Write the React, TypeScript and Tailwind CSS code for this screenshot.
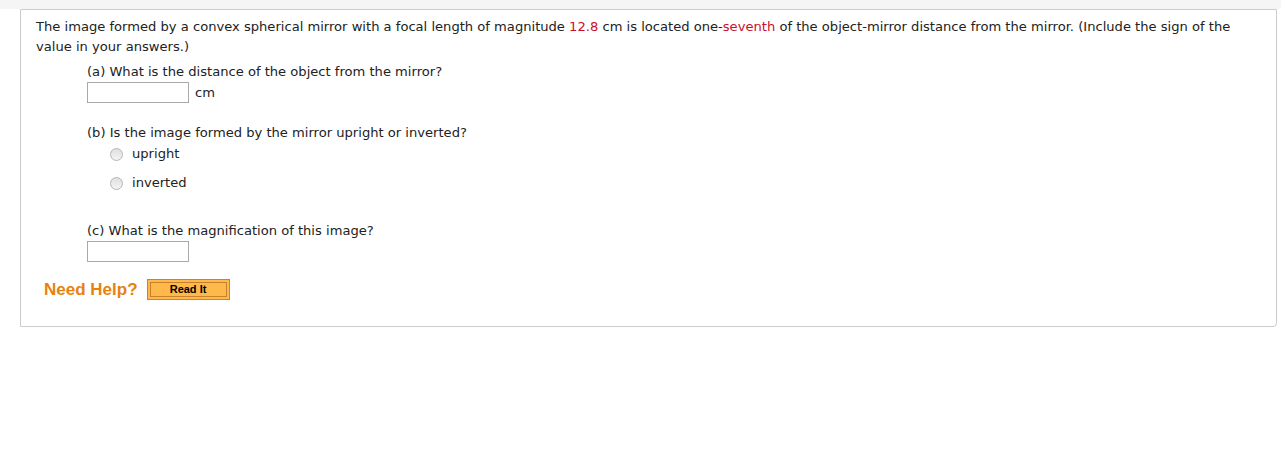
import React from 'react';

function Radio({ label }: { label: string }) {
  return (
    <label className="flex items-center h-[20px]">
      <span className="w-[13px] h-[13px] rounded-full border border-[#b5b5b5] bg-gradient-to-b from-[#e0e0e0] to-[#f4f4f4] ml-[89px] mr-[9px]" />
      <span>{label}</span>
    </label>
  );
}

export default function App() {
  return (
    <div className="bg-white w-[1281px] h-[460px] text-[13.1px] leading-[20px] text-[#222] font-['DejaVu_Sans',Verdana,sans-serif]">
      <div className="h-[9px] bg-[#f5f5f5]" />
      <div className="ml-[20px] mr-[4px] border border-[#cccccc] rounded-br-[4px] pl-[15px] pr-[10px] pt-[7px] pb-[26px]">
        <p className="max-w-[1212px]">
          The image formed by a convex spherical mirror with a focal length of magnitude{' '}
          <span className="text-[#c8102e]">12.8</span> cm is located one-
          <span className="text-[#c8102e]">seventh</span> of the object-mirror distance from the mirror. (Include
          the sign of the value in your answers.)
        </p>

        <div className="ml-[51px] mt-[5px]">
          <p>(a) What is the distance of the object from the mirror?</p>
          <div className="flex items-center">
            <input className="w-[102px] h-[21px] border border-[#a9a9a9] bg-white" />
            <span className="ml-[6px]">cm</span>
          </div>
        </div>

        <div className="mt-[20px]">
          <p className="ml-[51px]">(b) Is the image formed by the mirror upright or inverted?</p>
          <div className="flex flex-col gap-[9px] -ml-[15px] mt-[1px]">
            <Radio label="upright" />
            <Radio label="inverted" />
          </div>
        </div>

        <div className="ml-[51px] mt-[28px]">
          <p>(c) What is the magnification of this image?</p>
          <input className="w-[102px] h-[21px] border border-[#a9a9a9] bg-white" />
        </div>

        <div className="flex items-center mt-[17px] ml-[8px] font-['Liberation_Sans',Arial,sans-serif]">
          <span className="text-[#e8820e] font-bold text-[17px]">Need Help?</span>
          <button className="ml-[9px] w-[83px] h-[21px] bg-[#fdb94a] border border-[#d27f25] p-[2px]">
            <span className="flex items-center justify-center w-full h-full border border-[#c9802c] text-[11px] font-bold text-black leading-none">
              Read It
            </span>
          </button>
        </div>
      </div>
    </div>
  );
}
